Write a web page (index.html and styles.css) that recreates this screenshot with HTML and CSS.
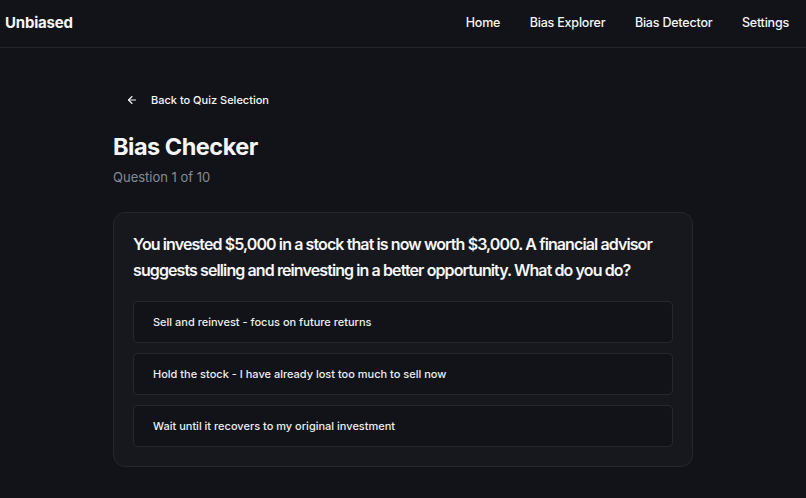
FILE: index.html
```html
<!DOCTYPE html>
<html>
<head>
	<meta charset="utf-8">
	<title>Unbiased - Bias Checker</title>
	<link rel="stylesheet" href="styles.css">
</head>
<body>
	<header class="topbar">
		<div class="logo">Unbiased</div>
		<nav class="nav">
			<a href="#">Home</a>
			<a href="#">Bias Explorer</a>
			<a href="#">Bias Detector</a>
			<a href="#">Settings</a>
		</nav>
	</header>

	<div class="container">
		<a href="#" class="back-link">
			<svg width="12" height="12" viewBox="0 0 24 24" fill="none" stroke="currentColor" stroke-width="2.2" stroke-linecap="round" stroke-linejoin="round">
				<path d="M19 12H5"/>
				<path d="M12 19l-7-7 7-7"/>
			</svg>
			<span>Back to Quiz Selection</span>
		</a>

		<h1 class="title">Bias Checker</h1>
		<p class="progress">Question 1 of 10</p>

		<div class="card">
			<p class="question">You invested $5,000 in a stock that is now worth $3,000. A financial advisor suggests selling and reinvesting in a better opportunity. What do you do?</p>

			<div class="options">
				<button type="button" class="option">Sell and reinvest - focus on future returns</button>
				<button type="button" class="option">Hold the stock - I have already lost too much to sell now</button>
				<button type="button" class="option">Wait until it recovers to my original investment</button>
			</div>
		</div>
	</div>
</body>
</html>
```

FILE: styles.css
```css
body {
	font-family: Inter, "Liberation Sans", Arial, sans-serif;
	margin: 0;
	padding: 0;
	background-color: #111318;
	color: #f5f6f7;
}

a {
	color: inherit;
	text-decoration: none;
}

.topbar {
	height: 47px;
	display: flex;
	align-items: center;
	justify-content: space-between;
	padding: 0 17px 0 5px;
	border-bottom: 1px solid #22252b;
}

.logo {
	font-size: 15px;
	font-weight: 700;
	letter-spacing: -0.2px;
	padding-bottom: 3px;
}

.nav {
	display: flex;
	gap: 29.5px;
	padding-bottom: 3px;
}

.nav a {
	font-size: 12.5px;
	font-weight: 500;
	letter-spacing: -0.2px;
}

.container {
	max-width: 580px;
	margin: 0 auto;
	padding-top: 42px;
}

.back-link {
	display: inline-flex;
	align-items: center;
	gap: 13px;
	margin-left: 13px;
	font-size: 11px;
	font-weight: 500;
}

.title {
	font-size: 23.5px;
	font-weight: 700;
	letter-spacing: -0.5px;
	margin: 22px 0 0;
	line-height: 30px;
}

.progress {
	font-size: 13px;
	color: #878b94;
	margin: 7px 0 0;
}

.card {
	margin-top: 27px;
	background-color: #16181d;
	border: 1px solid #25282e;
	border-radius: 12px;
	padding: 18px 19px 19px;
}

.question {
	font-size: 16px;
	font-weight: 600;
	line-height: 26px;
	letter-spacing: -0.9px;
	margin: 0 0 18px;
}

.options {
	display: flex;
	flex-direction: column;
	gap: 10px;
}

.option {
	font-family: inherit;
	font-size: 11px;
	font-weight: 500;
	color: #eceef0;
	text-align: left;
	height: 42px;
	padding: 0 19px;
	border-radius: 5px;
	border: 1px solid #25282e;
	background-color: #111318;
	cursor: pointer;
}

.option:hover {
	background-color: #1b1e24;
}
```
